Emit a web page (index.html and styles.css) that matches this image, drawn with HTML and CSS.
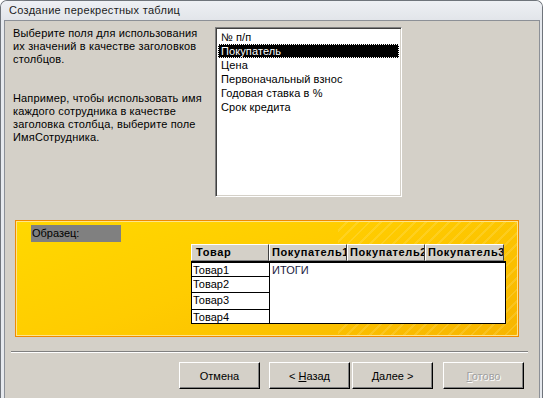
FILE: index.html
```html
<!DOCTYPE html>
<html lang="ru">
<head>
    <meta charset="UTF-8">
    <title>Создание перекрестных таблиц</title>
    <link rel="stylesheet" href="styles.css">
</head>
<body>
    <div class="window">
        <div class="titlebar">Создание перекрестных таблиц</div>
        <div class="client">
            <div class="top">
                <div class="hint">
                    <p>Выберите поля для использования их значений в качестве заголовков столбцов.</p>
                    <p class="example">Например, чтобы использовать имя каждого сотрудника в качестве заголовка столбца, выберите поле ИмяСотрудника.</p>
                </div>
                <ul class="listbox">
                    <li>№ п/п</li>
                    <li class="selected">Покупатель</li>
                    <li>Цена</li>
                    <li>Первоначальный взнос</li>
                    <li>Годовая ставка в %</li>
                    <li>Срок кредита</li>
                </ul>
            </div>

            <div class="sample">
                <div class="sample-label">Образец:</div>
                <div class="grid">
                    <div class="grid-head">
                        <div class="hcell first">Товар</div>
                        <div class="hcell">Покупатель1</div>
                        <div class="hcell">Покупатель2</div>
                        <div class="hcell">Покупатель3</div>
                    </div>
                    <div class="grid-body">
                        <div class="rows">
                            <div class="rcell h15">Товар1</div>
                            <div class="rcell h16">Товар2</div>
                            <div class="rcell h17">Товар3</div>
                            <div class="rcell last">Товар4</div>
                        </div>
                        <div class="totals">ИТОГИ</div>
                    </div>
                </div>
            </div>

            <div class="separator"></div>

            <div class="buttons">
                <button class="btn">Отмена</button>
                <button class="btn back">&lt; <u>Н</u>азад</button>
                <button class="btn next"><u>Д</u>алее &gt;</button>
                <button class="btn finish disabled"><u>Г</u>отово</button>
            </div>
        </div>
    </div>
</body>
</html>
```

FILE: styles.css
```css
:root {
    --face: #d4d0c8;
    --shadow: #808080;
    --dark: #404040;
    --font-main: "Liberation Sans", Arial, sans-serif;
}
* { box-sizing: border-box; }
body {
    margin: 0;
    font-family: var(--font-main);
    font-size: 11px;
    color: #000;
    background: #fff;
}
.window {
    width: 543px;
    height: 398px;
    border: 1px solid #6f747b;
    border-bottom: none;
    border-radius: 7px 7px 0 0;
    background: #e6e9ee;
    display: flex;
    flex-direction: column;
    overflow: hidden;
}
.titlebar {
    height: 19px;
    line-height: 19px;
    padding-left: 8px;
    font-size: 11px;
    letter-spacing: 0.3px;
    color: #1c1c1c;
    background: linear-gradient(#eef0f4, #e2e5ea);
}
.client {
    flex: 1;
    margin: 0 2px 0 3px;
    border: 1px solid #8c9097;
    border-bottom: none;
    background: var(--face);
    padding: 6px 0 0 0;
    display: flex;
    flex-direction: column;
}

/* top part: hint text and field list */
.top {
    display: flex;
    padding-left: 8px;
    height: 170px;
}
.hint {
    width: 202px;
}
.hint p {
    margin: 0;
    width: 190px;
    line-height: 13px;
    letter-spacing: 0.15px;
}
.hint .example { margin-top: 26px; }
.listbox {
    list-style: none;
    margin: 0;
    width: 187px;
    height: 170px;
    padding: 2px 2px;
    background: #fff;
    border: 1px solid;
    border-color: var(--shadow) #fff #fff var(--shadow);
    box-shadow: inset 1px 1px 0 var(--dark), inset -1px -1px 0 var(--face);
}
.listbox li {
    height: 14px;
    line-height: 14px;
    padding-left: 3px;
    white-space: nowrap;
    letter-spacing: 0.1px;
}
.listbox li.selected {
    background: #000;
    color: #fff;
    outline: 1px dotted #fff;
    outline-offset: -1px;
}

/* sample preview */
.sample {
    margin: 23px 0 0 10px;
    width: 504px;
    height: 117px;
    border: 1px solid #f08a00;
    box-shadow: inset 0 0 0 1px #ffe48a;
    padding: 4px 0 0 15px;
    background:
        repeating-linear-gradient(135deg, rgba(255,255,255,0) 0 6px, rgba(255,240,170,0.18) 6px 8px) right top / 180px 100% no-repeat,
        linear-gradient(160deg, #ffd800 0%, #ffcc00 45%, #f7b500 100%);
}
.sample-label {
    width: 90px;
    height: 17px;
    line-height: 16px;
    padding-left: 1px;
    background: var(--shadow);
}
.grid {
    margin: 2px 0 0 160px;
    width: 315px;
}
.grid-head {
    display: flex;
    height: 17px;
}
.hcell {
    width: 78px;
    background: var(--face);
    border: 1px solid;
    border-color: #fff var(--dark) var(--shadow) #fff;
    font-weight: bold;
    letter-spacing: 0.6px;
    line-height: 14px;
    padding-left: 2px;
    overflow: hidden;
    white-space: nowrap;
}
.hcell.first { padding-left: 4px; }
.hcell:last-child { width: 79px; }
.grid-body {
    display: flex;
    height: 63px;
    border: 1px solid #000;
    border-top-width: 2px;
    background: #fff;
}
.rows {
    width: 78px;
    border-right: 1px solid #000;
}
.rcell {
    height: 16px;
    line-height: 14px;
    border-bottom: 1px solid #000;
    padding-left: 1px;
}
.rcell.h15 { height: 14px; }
.rcell.h17 { height: 17px; }
.rcell.last { border-bottom: none; }
.totals {
    padding: 1px 0 0 2px;
    color: #1a1a40;
}

/* bottom */
.separator {
    margin: 14px 0 0 6px;
    width: 517px;
    height: 2px;
    border-top: 1px solid var(--shadow);
    border-bottom: 1px solid #fff;
}
.buttons {
    display: flex;
    margin: 9px 0 0 174px;
}
.btn {
    flex: none;
    width: 81px;
    height: 27px;
    font-family: var(--font-main);
    font-size: 11px;
    background: var(--face);
    border: 1px solid;
    border-color: #fff #000 #000 #fff;
    box-shadow: inset -1px -1px 0 var(--shadow);
    padding: 0;
    color: #000;
}
.btn.back { margin-left: 9px; }
.btn.next { margin-left: 2px; }
.btn.finish { margin-left: 10px; }
.btn.disabled {
    color: #a0a0a0;
    text-shadow: 1px 1px 0 #fff;
}
```
